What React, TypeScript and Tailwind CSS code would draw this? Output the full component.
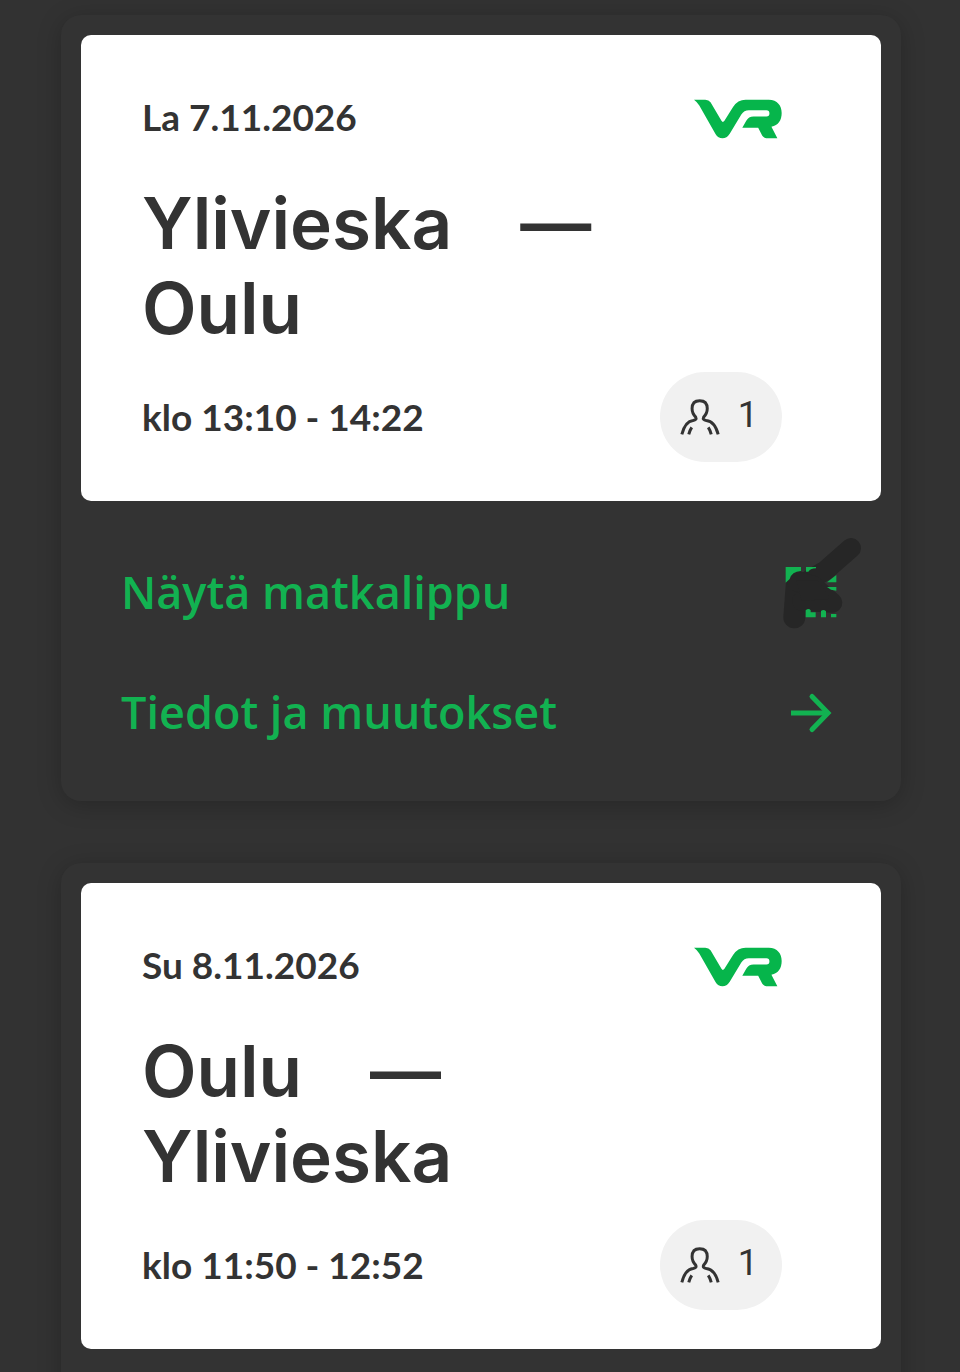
import { ReactNode } from 'react';

type Trip = {
  date: string;
  from: string;
  to: string;
  time: string;
  passengers: number;
  showActions: boolean;
};

const trips: Trip[] = [
  { date: 'La 7.11.2026', from: 'Ylivieska', to: 'Oulu', time: 'klo 13:10 - 14:22', passengers: 1, showActions: true },
  { date: 'Su 8.11.2026', from: 'Oulu', to: 'Ylivieska', time: 'klo 11:50 - 12:52', passengers: 1, showActions: false },
];

function Logo() {
  return (
    <svg viewBox="42 57 266 119" className="h-10 w-[88px] fill-[#06b54b]" role="img" aria-label="VR">
      <path d="M42 58H76Q87 58 92 66L125 122Q129 129 134 122L160 80Q174 58 198 58H268C294 58 307 76 307 98C307 120 297 135 276 140L294 175H266Q254 175 248 166L236 143H188L200 122Q207 109 222 109H261Q270 109 270 100Q270 90 261 90H208Q193 90 185 103L150 161Q141 175 128 175Q115 175 107 162L58 76Q51 64 42 58Z" />
    </svg>
  );
}

function PersonIcon() {
  return (
    <svg viewBox="118 117 120 109" className="h-9 w-10" fill="none" stroke="#333" strokeWidth="9" aria-hidden="true">
      <path d="M123 224C129 201 138 184 157 182Q169 180 165 172C158 165 154 156 154 146C154 130 163 122 177 122C191 122 200 130 200 146C200 156 196 165 189 172Q185 180 197 182C217 184 227 201 233 224" />
      <path d="M144 224Q147 212 153 203M203 203Q209 212 212 224" />
    </svg>
  );
}

function TicketCodeIcon() {
  return (
    <svg viewBox="78 140 156 156" className="size-13 overflow-visible" aria-hidden="true">
      <g stroke="#262626" fill="none" strokeLinecap="round" strokeLinejoin="round">
        <path d="M276 83L200 150L152 178" strokeWidth="60" />
        <path d="M114 184L106 291" strokeWidth="66" />
        <path d="M114 184L162 196L220 247L130 242" strokeWidth="60" />
      </g>
      <path d="M112 180H176L215 235L128 242Z" fill="#262626" />
      <g fill="#12b251">
        <path d="M80 140H126V152Q98 154 92 176L80 187ZM141 140H171V144Q156 144 148 154H141ZM204 186L232 164V186ZM204 200H232V211L216 208Z" />
        <path d="M140 270Q149 262 155 270V276H170V291H140ZM186 272Q194 266 201 273V291H186ZM216 281H232V291H216Z" />
      </g>
    </svg>
  );
}

function ArrowIcon() {
  return (
    <svg viewBox="0 0 52 52" className="size-13" fill="none" stroke="#12b251" strokeWidth="5" aria-hidden="true">
      <path d="M6 26H43" />
      <path d="M27 9.500L43 26L27 42.500" strokeLinecap="round" />
    </svg>
  );
}

function ActionLink({ label, icon }: { label: string; icon: ReactNode }) {
  return (
    <a href="#" className="flex h-30 items-center justify-between text-[#12b251]">
      <span className="pb-0.5 font-['Open_Sans',sans-serif] text-[45px] font-semibold">{label}</span>
      {icon}
    </a>
  );
}

function TripCard({ trip }: { trip: Trip }) {
  return (
    <article className="rounded-[20px] bg-[#333] p-5 shadow-[0_4px_24px_rgba(0,0,0,0.22)]">
      <div className="rounded-[10px] bg-white pt-15 pr-[99px] pb-[39px] pl-[61px]">
        <div className="flex h-12 items-center justify-between">
          <time className="pb-1 text-[37px]">{trip.date}</time>
          <Logo />
        </div>
        <h2 className="mt-[38px] font-['Inter',sans-serif] text-[71px] leading-[85px] font-semibold">
          {trip.from}
          <span className="ml-[68px]">—</span>
          <br />
          {trip.to}
        </h2>
        <div className="mt-[21px] flex items-center justify-between">
          <p className="text-[37px]">{trip.time}</p>
          <div className="flex h-[90px] items-center gap-[18px] rounded-full bg-[#f1f1f1] px-5 font-['Roboto',sans-serif] text-4xl font-normal">
            <PersonIcon />
            <span className="pr-1 pb-1">{trip.passengers}</span>
          </div>
        </div>
      </div>
      <nav className="mt-8 pr-11 pb-2 pl-10">
        {trip.showActions && (
          <>
            <ActionLink label="Näytä matkalippu" icon={<TicketCodeIcon />} />
            <ActionLink label="Tiedot ja muutokset" icon={<ArrowIcon />} />
          </>
        )}
      </nav>
    </article>
  );
}

export default function App() {
  return (
    <main className="flex h-screen flex-col gap-[62px] overflow-hidden bg-[#323232] pt-[15px] pr-[59px] pl-[61px] font-['Lato',sans-serif] font-bold text-[#333]">
      {trips.map((trip) => (
        <TripCard key={trip.date} trip={trip} />
      ))}
    </main>
  );
}
